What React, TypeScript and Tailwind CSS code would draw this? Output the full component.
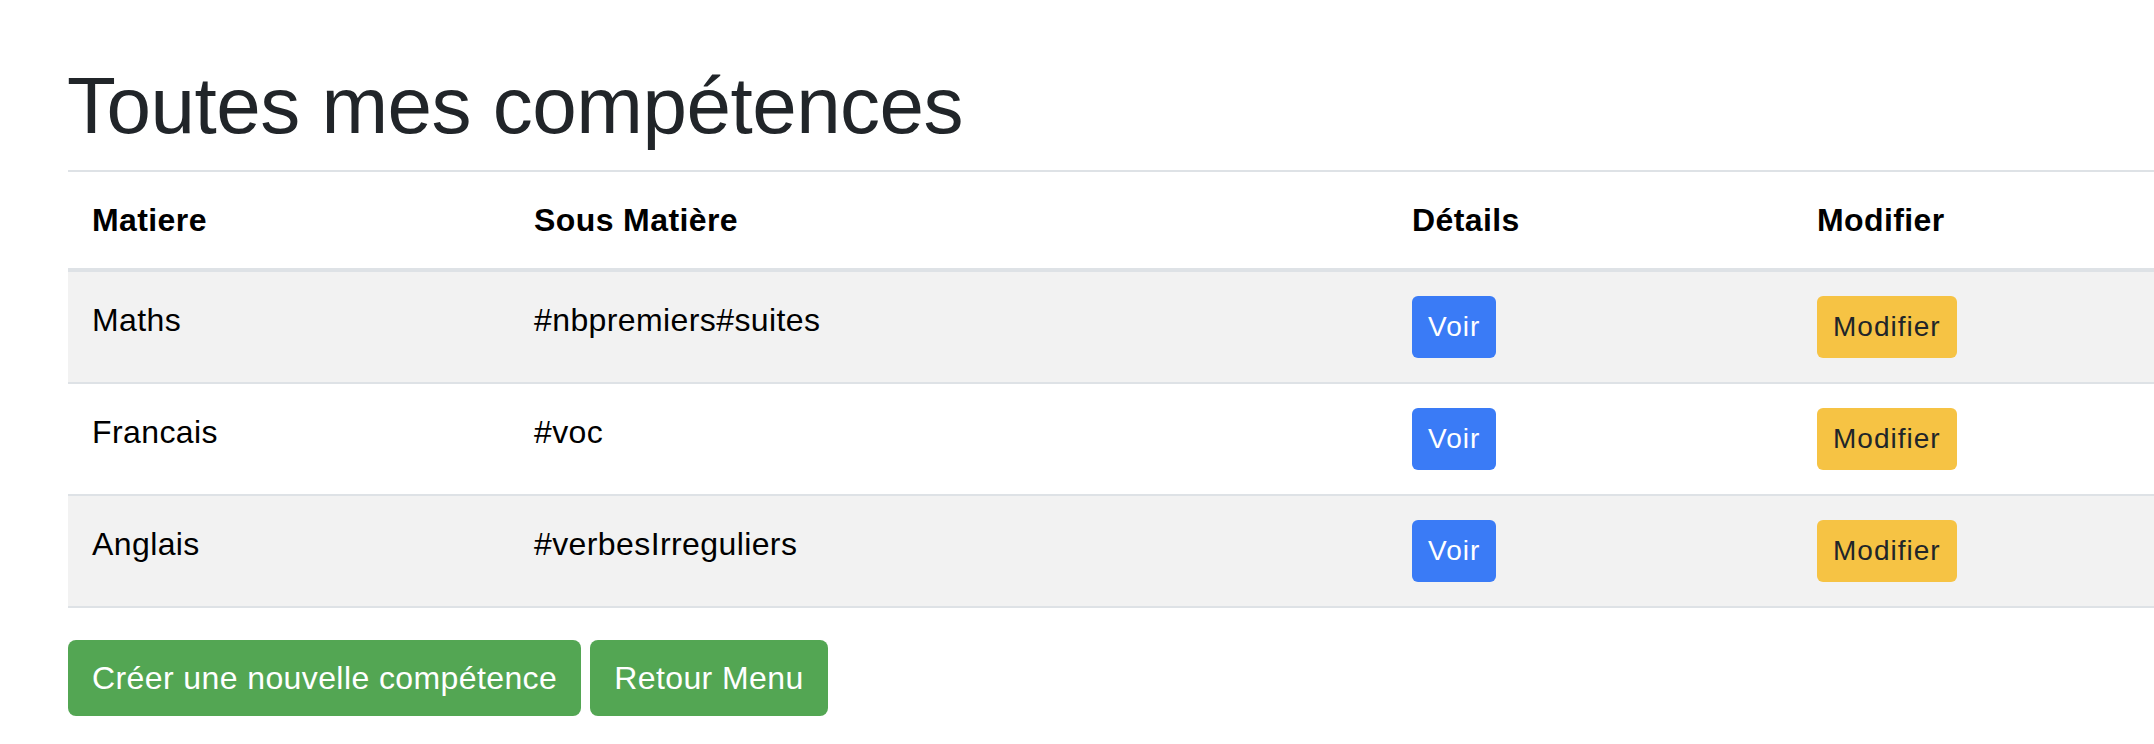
import React from 'react';

type Competence = {
    matiere: string;
    sousMatiere: string;
};

const COMPETENCES: Competence[] = [
    { matiere: 'Maths', sousMatiere: '#nbpremiers#suites' },
    { matiere: 'Francais', sousMatiere: '#voc' },
    { matiere: 'Anglais', sousMatiere: '#verbesIrreguliers' },
];

const App: React.FC = () => {
    return (
        <div className="min-h-screen bg-white pl-[68px] pt-[58px] text-[#212529] font-['Liberation_Sans',Arial,sans-serif]">
            <h1 className="text-[80px] leading-[96px] font-normal mb-[16px] -ml-[1px] tracking-[-0.5px]">Toutes mes compétences</h1>

            <table className="w-full table-fixed border-collapse text-[32px] leading-[48px] tracking-[0.4px] text-black mb-[32px]">
                <colgroup>
                    <col className="w-[442px]" />
                    <col className="w-[878px]" />
                    <col className="w-[405px]" />
                    <col />
                </colgroup>
                <thead>
                    <tr>
                        <th className="text-left font-bold p-[24px] border-t-[2px] border-b-[4px] border-[#dee2e6]">Matiere</th>
                        <th className="text-left font-bold p-[24px] border-t-[2px] border-b-[4px] border-[#dee2e6]">Sous Matière</th>
                        <th className="text-left font-bold p-[24px] border-t-[2px] border-b-[4px] border-[#dee2e6]">Détails</th>
                        <th className="text-left font-bold p-[24px] border-t-[2px] border-b-[4px] border-[#dee2e6]">Modifier</th>
                    </tr>
                </thead>
                <tbody>
                    {COMPETENCES.map((c, i) => (
                        <tr key={c.matiere} className={i % 2 === 0 ? 'bg-[#f2f2f2]' : 'bg-white'}>
                            <td className="align-top p-[24px] border-b-[2px] border-[#dee2e6]">{c.matiere}</td>
                            <td className="align-top p-[24px] border-b-[2px] border-[#dee2e6]">{c.sousMatiere}</td>
                            <td className="align-top p-[24px] border-b-[2px] border-[#dee2e6]">
                                <button className="h-[62px] px-[16px] rounded-[6px] bg-[#3a7bf6] text-white text-[28px] leading-[42px] tracking-[1px]">
                                    Voir
                                </button>
                            </td>
                            <td className="align-top p-[24px] border-b-[2px] border-[#dee2e6]">
                                <button className="h-[62px] px-[16px] rounded-[6px] bg-[#f6c344] text-[#212529] text-[28px] leading-[42px] tracking-[1px]">
                                    Modifier
                                </button>
                            </td>
                        </tr>
                    ))}
                </tbody>
            </table>

            <div className="flex gap-[9px]">
                <button className="h-[76px] px-[24px] rounded-[8px] bg-[#53a653] text-white text-[32px] leading-[48px] tracking-[0.4px]">
                    Créer une nouvelle compétence
                </button>
                <button className="h-[76px] px-[24px] rounded-[8px] bg-[#53a653] text-white text-[32px] leading-[48px] tracking-[0.4px]">
                    Retour Menu
                </button>
            </div>
        </div>
    );
};

export default App;
